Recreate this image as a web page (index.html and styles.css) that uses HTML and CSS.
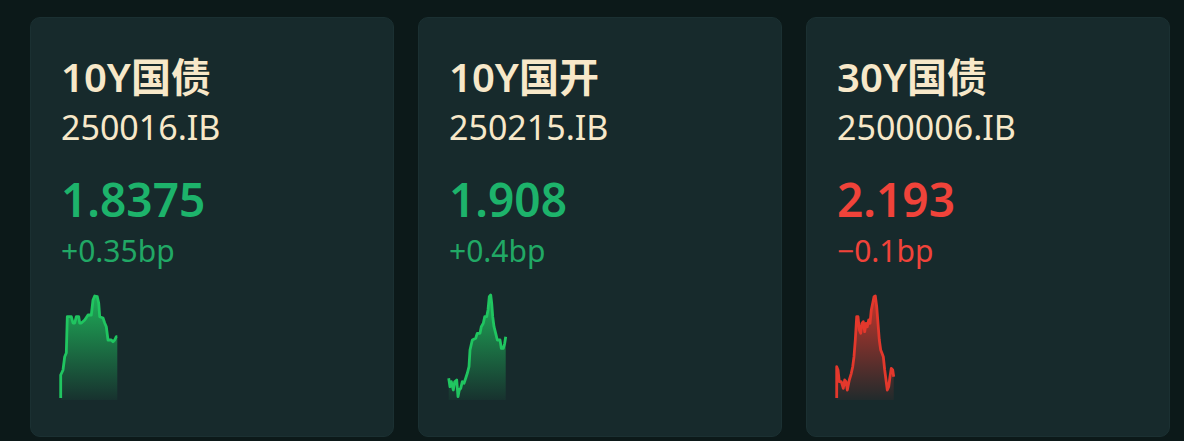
FILE: index.html
```html
<!DOCTYPE html>
<html lang="zh-CN">
<head>
    <meta charset="UTF-8">
    <meta name="viewport" content="width=device-width, initial-scale=1.0">
    <title>Bond Quotes</title>
    <link rel="stylesheet" href="styles.css">
</head>
<body>
    <div id="quotes" class="quotes"></div>

    <script>
        const bonds = [
            {
                name: '10Y国债', code: '250016.IB', price: '1.8375', change: '+0.35bp', dir: 'up',
                points: [[2.7,108],[2.7,85],[5,80],[6.7,66.7],[8.3,63],[9.3,26.7],[13.3,26.7],[15,33],[16.7,33],[18.3,26.7],[20.7,26.7],[21.7,33],[23.3,33],[26.7,30],[30,25],[33.3,25],[35,10],[36.7,6],[39.3,6.7],[40.7,13],[41.7,26.7],[45,28],[46.7,33],[48.3,36.7],[50,50],[53.3,50],[55,51.7],[56.7,50],[58.3,46.7],[59.3,46.7]]
            },
            {
                name: '10Y国开', code: '250215.IB', price: '1.908', change: '+0.4bp', dir: 'up',
                points: [[2.7,88.3],[4,96.7],[5.3,91.7],[7.3,100],[8.7,91.7],[10.7,90],[12,106.7],[13.3,100],[14.7,98.3],[16.3,91.7],[18,93.3],[19.7,88.3],[21.3,83.3],[23,76.7],[24,60],[26.3,50],[29.7,48.3],[31.3,43.3],[34,43.3],[35.3,36.7],[37.3,33.3],[38.7,26.7],[40.7,26.7],[42,20],[43.3,6.7],[44.7,5],[45.7,13.3],[46.7,26.7],[48,36.7],[49.7,43.3],[51.3,50],[54,50],[55.3,58.3],[57.3,58.3],[58.7,53.3],[59.7,46.7]]
            },
            {
                name: '30Y国债', code: '2500006.IB', price: '2.193', change: '\u22120.1bp', dir: 'down',
                points: [[2.7,108],[2.7,76.7],[4,80],[5.3,91.7],[7.3,91.7],[9.3,98.3],[10.7,90],[12,91.7],[13.3,100],[15.3,90],[17.3,83.3],[18.7,76.7],[20,66.7],[21.3,50],[22.7,26.7],[24,26.7],[25.3,40],[26.7,43.3],[28,33.3],[29.3,31.7],[30.7,41.7],[32,33.3],[33.3,36.7],[34.7,30],[36,33.3],[37.3,20],[38.7,13.3],[40,6.7],[41.3,6],[42.7,16.7],[44,33.3],[45.3,50],[46.7,60],[48,63.3],[49.3,66.7],[50.7,80],[52,90],[53.3,100],[54.7,96.7],[56,86.7],[57.3,78.3],[58.7,80],[59.7,86.7]]
            }
        ];

        const container = document.getElementById('quotes');

        function sparkline(points, dir, id) {
            const line = points.map(p => p.join(',')).join(' ');
            const first = points[0][0];
            const last = points[points.length - 1][0];
            const area = `${first},110 ${line} ${last},110`;
            const color = dir === 'up' ? '#20c560' : '#e3382c';
            return `
                <svg class="spark" width="64" height="112" viewBox="0 0 64 112">
                    <defs>
                        <linearGradient id="g${id}" x1="0" y1="0" x2="0" y2="1">
                            <stop offset="0" stop-color="${color}" stop-opacity="0.85"/>
                            <stop offset="1" stop-color="${color}" stop-opacity="0.05"/>
                        </linearGradient>
                    </defs>
                    <polygon points="${area}" fill="url(#g${id})"/>
                    <polyline points="${line}" fill="none" stroke="${color}" stroke-width="2.8" stroke-linejoin="round"/>
                </svg>
            `;
        }

        bonds.forEach((bond, i) => {
            const card = document.createElement('div');
            card.classList.add('card');
            card.innerHTML = `
                <h3 class="name">${bond.name}</h3>
                <p class="code">${bond.code}</p>
                <p class="price ${bond.dir}">${bond.price}</p>
                <p class="change ${bond.dir}">${bond.change}</p>
                ${sparkline(bond.points, bond.dir, i)}
            `;
            container.appendChild(card);
        });
    </script>
</body>
</html>
```

FILE: styles.css
```css
body {
    font-family: "Noto Sans", "Noto Sans CJK SC", sans-serif;
    margin: 0;
    padding: 17px 0 0 30px;
    background-color: #0c1919;
    overflow: hidden;
}
.quotes {
    display: flex;
    gap: 24px;
}
.card {
    width: 364px;
    height: 420px;
    box-sizing: border-box;
    padding: 35px 30px 0;
    background-color: #172a2c;
    border-radius: 10px;
    border: 1px solid #1b3032;
}
.name {
    margin: 0;
    font-size: 40px;
    line-height: 48px;
    font-weight: 600;
    color: #f7e8c9;
}
.code {
    margin: 6px 0 0;
    font-size: 34px;
    line-height: 40px;
    color: #f7e8c9;
}
.price {
    margin: 26px 0 0;
    font-size: 46px;
    line-height: 52px;
    font-weight: 600;
}
.change {
    margin: 8px 0 0;
    font-size: 30px;
    line-height: 36px;
}
.price.up {
    color: #1db36b;
}
.change.up {
    color: #21a865;
}
.price.down,
.change.down {
    color: #f0433a;
}
.spark {
    display: block;
    margin: 21px 0 0 -3px;
}
```
